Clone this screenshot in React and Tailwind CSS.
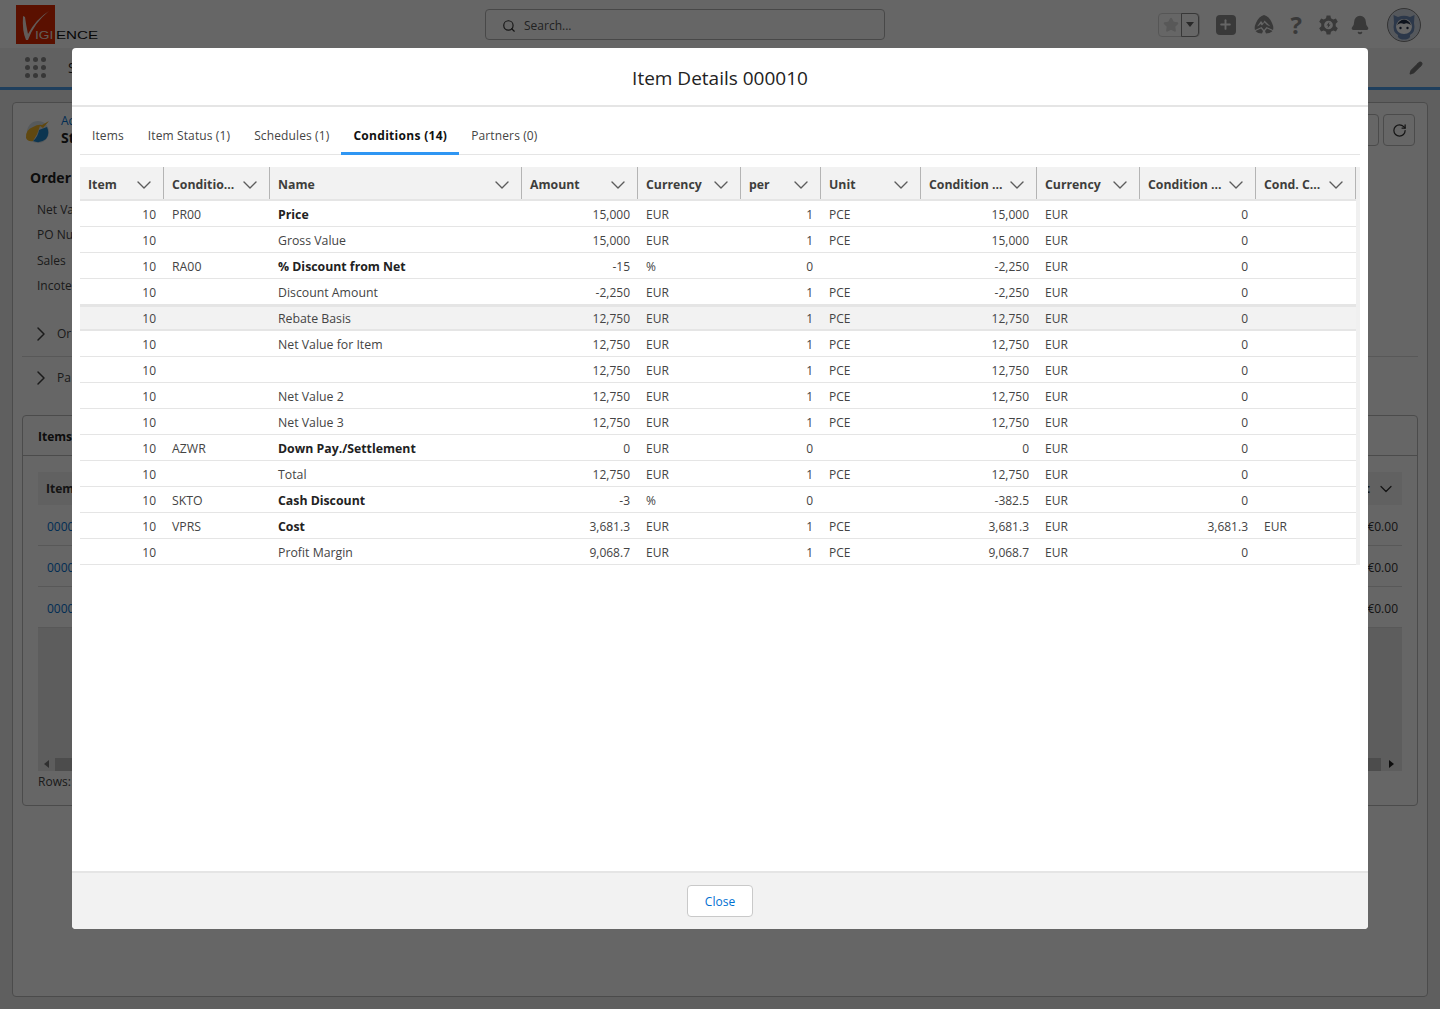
import { ChevronDown, ChevronRight, Search, Plus, Bell, Pencil, RotateCw, Star } from "lucide-react";

const GRID = "grid grid-cols-[84px_106px_252px_116px_103px_80px_100px_116px_103px_116px_100px]";

const HEADERS = ["Item", "Conditio...", "Name", "Amount", "Currency", "per", "Unit", "Condition ...", "Currency", "Condition ...", "Cond. C..."];

const ROWS = [
    ["PR00", "Price", "15,000", "EUR", "1", "PCE", "15,000", "EUR", "0", "", true],
    ["", "Gross Value", "15,000", "EUR", "1", "PCE", "15,000", "EUR", "0", ""],
    ["RA00", "% Discount from Net", "-15", "%", "0", "", "-2,250", "EUR", "0", "", true],
    ["", "Discount Amount", "-2,250", "EUR", "1", "PCE", "-2,250", "EUR", "0", ""],
    ["", "Rebate Basis", "12,750", "EUR", "1", "PCE", "12,750", "EUR", "0", ""],
    ["", "Net Value for Item", "12,750", "EUR", "1", "PCE", "12,750", "EUR", "0", ""],
    ["", "", "12,750", "EUR", "1", "PCE", "12,750", "EUR", "0", ""],
    ["", "Net Value 2", "12,750", "EUR", "1", "PCE", "12,750", "EUR", "0", ""],
    ["", "Net Value 3", "12,750", "EUR", "1", "PCE", "12,750", "EUR", "0", ""],
    ["AZWR", "Down Pay./Settlement", "0", "EUR", "0", "", "0", "EUR", "0", "", true],
    ["", "Total", "12,750", "EUR", "1", "PCE", "12,750", "EUR", "0", ""],
    ["SKTO", "Cash Discount", "-3", "%", "0", "", "-382.5", "EUR", "0", "", true],
    ["VPRS", "Cost", "3,681.3", "EUR", "1", "PCE", "3,681.3", "EUR", "3,681.3", "EUR", true],
    ["", "Profit Margin", "9,068.7", "EUR", "1", "PCE", "9,068.7", "EUR", "0", ""],
];

const TABS = ["Items", "Item Status (1)", "Schedules (1)", "Conditions (14)", "Partners (0)"];

function TrailIcon() {
    return (
        <svg width="20" height="19" viewBox="0 0 20 19">
            <path d="M10 0 Q15 1 18 8 Q20 12 19 15 L12.5 12 L10 15 L7.5 12 L1 15 Q0 12 2 8 Q5 1 10 0 Z" fill="#8f8f8f" />
            <path d="M3 11.5 L7 6 L9 8.5 L10.5 5.5 L16.5 11.5 L13 10 L10.5 7.5 L8 10.5 L6.5 9 L5 10.5 Z" fill="#ffffff" />
            <path d="M1.5 16 L7 13.5 L9 16 L8 18.5 Q3.5 18.5 1.5 16 Z M18.5 16 L13 13.5 L11 16 L12 18.5 Q16.5 18.5 18.5 16 Z" fill="#8f8f8f" />
        </svg>
    );
}

function GearIcon() {
    return (
        <svg width="19" height="20" viewBox="0 0 20 20" fill="#8f8f8f">
            <path d="M8 0 H12 L12.6 3 L15 4.2 L17.8 3.2 L19.8 6.6 L17.6 8.6 V11.4 L19.8 13.4 L17.8 16.8 L15 15.8 L12.6 17 L12 20 H8 L7.4 17 L5 15.8 L2.2 16.8 L0.2 13.4 L2.4 11.4 V8.6 L0.2 6.6 L2.2 3.2 L5 4.2 L7.4 3 Z" />
            <circle cx="10" cy="10" r="4.6" fill="#ffffff" />
            <path d="M11 6.5 L7.8 10.6 H9.6 L9 13.5 L12.2 9.4 H10.4 Z" />
        </svg>
    );
}

function Avatar() {
    return (
        <svg width="34" height="34" viewBox="0 0 34 34">
            <circle cx="17" cy="17" r="16.5" fill="#d5dbe6" stroke="#808080" />
            <path d="M6.5 7 L11 9 Q17 6.5 23 9 L27.5 7 L27 15 Q29 24 23 27 Q24 30 19 31.5 H15 Q10 30 11 27 Q5 24 7 15 Z" fill="#6f8db8" />
            <path d="M9 19 Q10 11 17 11 Q24 11 25 19 Q24 26 17 26 Q10 26 9 19 Z" fill="#ffffff" />
            <path d="M10 17 Q12 12 17 11.5 Q22 12 24 17 Q20 14 17 16 Q13 14 10 17 Z" fill="#243049" />
            <circle cx="13.5" cy="20" r="1.2" fill="#243049" />
            <circle cx="20.5" cy="20" r="1.2" fill="#243049" />
        </svg>
    );
}

function Logo() {
    return (
        <div className="relative mt-[-1px] h-[39px] w-[83px] shrink-0">
            <div className="h-[39px] w-[39px] bg-[#e02800]">
                <svg className="absolute left-0 top-0" width="39" height="39" viewBox="0 0 39 39">
                    <path d="M7 11 Q6 26 10 35 L12 35 Q18 18 33 6 Q20 14 12 29 Q10 20 9 12 Z" fill="#f5e4dc" />
                </svg>
            </div>
            <span className="absolute bottom-[3px] left-[19px] origin-left scale-x-[1.25] font-['Liberation_Sans',sans-serif] text-[11px] leading-none text-[#f5e4dc]">
                IGI
            </span>
            <span className="absolute bottom-[3px] left-[40px] origin-left scale-x-[1.38] font-['Liberation_Sans',sans-serif] text-[11px] leading-none text-[#111]">
                ENCE
            </span>
        </div>
    );
}

function Header() {
    return (
        <header className="flex h-12 items-center bg-white pl-4 pr-[19px] pt-[1px]">
            <Logo />
            <div className="ml-[386px] flex h-[31px] w-[400px] items-center rounded border border-[#b5b5b5] pl-4 pt-[2px] text-xs text-[#555]">
                <Search size={14} className="mr-2 text-[#333]" />
                Search...
            </div>
            <div className="ml-auto flex items-center">
                <div className="flex h-[24px] w-[42px] items-center rounded-sm border border-[#d8d8d8]">
                    <Star size={16} className="ml-[4px] fill-[#dcdcdc] text-[#dcdcdc]" />
                    <div className="ml-auto flex h-[24px] w-[18px] items-center justify-center rounded-r-sm border border-[#8a8a8a]">
                        <div className="h-0 w-0 border-x-[4px] border-t-[5px] border-x-transparent border-t-[#666]" />
                    </div>
                </div>
                <div className="ml-[16px] flex h-5 w-5 items-center justify-center rounded bg-[#8f8f8f]">
                    <Plus size={15} strokeWidth={3} className="text-white" />
                </div>
                <div className="ml-[18px]"><TrailIcon /></div>
                <span className="ml-[17px] font-['Open_Sans',sans-serif] text-[24px] font-bold leading-none text-[#8f8f8f]">?</span>
                <div className="ml-[17px]"><GearIcon /></div>
                <Bell size={20} className="ml-[12px] fill-[#8f8f8f] text-[#8f8f8f]" />
                <div className="ml-[17px]"><Avatar /></div>
            </div>
        </header>
    );
}

function NavBar() {
    return (
        <nav className="flex h-[42px] items-center border-b-[3px] border-[#4f9fe8] bg-[#f3f3f3] pl-[25px] pr-[17px]">
            <div className="grid grid-cols-3 gap-x-[3px] gap-y-[3px]">
                {Array.from({ length: 9 }).map((_, i) => (
                    <span key={i} className="h-[5px] w-[5px] rounded-full bg-[#8a8a8a]" />
                ))}
            </div>
            <span className="ml-[22px] text-sm text-[#222]">S</span>
            <Pencil size={14} className="ml-auto fill-[#777] text-[#777]" />
        </nav>
    );
}

function BrandMark() {
    return (
        <svg className="ml-[3px] mt-[5px] shrink-0" width="25" height="24" viewBox="0 0 25 24">
            <circle cx="13" cy="13" r="11" fill="#d8e0e6" />
            <path d="M14 11 Q19 9 22 8 Q25 15 21 20 Q15 25 8 22 Q13 18 14 11 Z" fill="#1f86c9" />
            <path d="M1 19 Q0 11 8 8 Q13 5 17 6 L24 2 L18 9 L15 7 Q13 15 8 22 Q3 23 1 19 Z" fill="#f0b429" />
        </svg>
    );
}

function BackgroundPage() {
    return (
        <main className="mx-3 mt-3 flex h-[895px] flex-col rounded border border-[#bbb] bg-white px-[9px]">
            <div className="flex h-[65px] items-start pt-[11px]">
                <BrandMark />
                <div className="ml-[11px] text-xs leading-[14px]">
                    <div className="text-[#0070d2]">Ac</div>
                    <div className="text-sm font-bold text-[#222]">St</div>
                </div>
                <div className="ml-auto flex">
                    <div className="h-8 w-8 rounded border border-[#bbb]" />
                    <div className="ml-1 mr-[3px] flex h-8 w-8 items-center justify-center rounded border border-[#bbb]">
                        <RotateCw size={15} className="text-[#333]" />
                    </div>
                </div>
            </div>
            <h2 className="ml-2 text-sm font-bold text-[#222]">Order</h2>
            <div className="ml-[15px] mt-[13px] flex flex-col gap-[8.33px] text-xs leading-[17px] text-[#444]">
                <span>Net Va</span>
                <span>PO Nu</span>
                <span>Sales</span>
                <span>Incote</span>
            </div>
            <div className="mt-[19px] flex h-[44px] items-center border-b border-[#ddd] pl-[7px] text-xs text-[#444]">
                <ChevronRight size={24} strokeWidth={1.5} className="mr-[4px]" />
                Or
            </div>
            <div className="flex h-[43px] items-center pl-[7px] text-xs text-[#444]">
                <ChevronRight size={24} strokeWidth={1.5} className="mr-[4px]" />
                Pa
            </div>
            <section className="mt-[15px] flex h-[391px] flex-col rounded border border-[#bbb] px-[15px]">
                <div className="-mx-[15px] flex h-[40px] items-center border-b border-[#bbb] pl-[15px] pt-[3px] text-xs font-bold text-[#222]">Items</div>
                <div className="mt-[16px] flex h-[33px] items-center justify-between bg-[#f2f2f2] pl-2 pr-[6px] pt-[1px] text-xs font-bold text-[#333]">
                    <span>Item</span>
                    <span className="flex items-center gap-[6px]">t<ChevronDown size={20} strokeWidth={1.5} /></span>
                </div>
                {[0, 1, 2].map((i) => (
                    <div key={i} className="flex h-[41px] items-center justify-between border-b border-[#ddd] pl-[9px] pr-[4px] pt-[4px] text-xs">
                        <span className="text-[#0070d2]">0000</span>
                        <span className="text-[#333]">€0.00</span>
                    </div>
                ))}
                <div className="flex h-[143px] flex-col justify-end bg-[#e8e8e8]">
                    <div className="flex h-[13px] items-center bg-[#e8e8e8] pl-[6px] pr-2">
                        <div className="h-0 w-0 border-y-[4px] border-r-[5px] border-y-transparent border-r-[#777]" />
                        <div className="ml-[6px] h-[13px] flex-1 bg-[#bdbdbd]" />
                        <div className="ml-[8px] h-0 w-0 border-y-[4px] border-l-[5px] border-y-transparent border-l-[#222]" />
                    </div>
                </div>
                <div className="mt-[3px] text-xs text-[#444]">Rows:</div>
            </section>
        </main>
    );
}

function ConditionsTable() {
    return (
        <div className="w-[1280px] bg-[#f0f0f0] pr-1">
            <div className={GRID + " h-[34px] border-b-2 border-[#e5e5e5] bg-[#f2f2f2]"}>
                {HEADERS.map((h, i) => (
                    <div key={i} className="flex h-[32px] items-center justify-between border-r border-[#b4b4b4] pl-2 pr-[7px] pt-[3px] text-[12.3px] font-bold text-[#3e3e3c]">
                        <span className="mt-px">{h}</span>
                        <ChevronDown size={24} strokeWidth={1.4} className="text-[#5c5c5c]" />
                    </div>
                ))}
            </div>
            {ROWS.map((r, i) => {
                const active = i === 4;
                return (
                    <div
                        key={i}
                        className={GRID + " h-[26px] items-center text-xs text-[#444] " + (active ? "border-y-2 border-[#e5e5e5] bg-[#f2f2f2] pt-px" : "border-b border-[#e5e5e5] bg-white pt-[2px]")}
                    >
                        <span className="pr-2 text-right">10</span>
                        <span className="pl-2 text-[12.3px] leading-4">{r[0]}</span>
                        <span className={"pl-2 text-[12.3px] leading-4 " + (r[10] ? "font-bold text-[#222]" : "")}>{r[1]}</span>
                        <span className="pr-2 text-right">{r[2]}</span>
                        <span className="pl-2">{r[3]}</span>
                        <span className="pr-2 text-right">{r[4]}</span>
                        <span className="pl-2">{r[5]}</span>
                        <span className="pr-2 text-right">{r[6]}</span>
                        <span className="pl-2">{r[7]}</span>
                        <span className="pr-2 text-right">{r[8]}</span>
                        <span className="pl-2">{r[9]}</span>
                    </div>
                );
            })}
        </div>
    );
}

function Modal() {
    return (
        <div className="absolute left-[72px] top-[48px] flex h-[881px] w-[1296px] flex-col rounded bg-white">
            <div className="flex h-[59px] shrink-0 items-center justify-center border-b-2 border-[#e5e5e5] pt-[4px] text-[19px] text-[#222]">
                Item Details 000010
            </div>
            <div className="flex min-h-0 flex-1 flex-col px-2">
                <div className="flex h-[48px] w-[1280px] shrink-0 items-end border-b border-[#e5e5e5]">
                    {TABS.map((t, i) => (
                        <div
                            key={t}
                            className={"flex h-[48px] items-center px-3 text-xs " + (i === 3 ? "-mb-px border-b-[3px] border-[#2f96f3] pt-[13px] font-bold tracking-[0.3px] text-[#111]" : "pt-[11px] tracking-[0.12px] text-[#444]")}
                        >
                            {t}
                        </div>
                    ))}
                </div>
                <div className="mt-3"><ConditionsTable /></div>
            </div>
            <div className="flex h-[58px] shrink-0 items-center justify-center rounded-b border-t-2 border-[#e5e5e5] bg-[#f2f2f2]">
                <button className="h-8 w-[66px] rounded border border-[#c9c9c9] bg-white pt-px text-xs text-[#0070d2]">Close</button>
            </div>
        </div>
    );
}

export default function App() {
    return (
        <div className="relative h-[1009px] w-[1440px] overflow-hidden bg-[#eeeeee] font-['Open_Sans',sans-serif]">
            <Header />
            <NavBar />
            <BackgroundPage />
            <div className="absolute inset-0 bg-black/60" />
            <Modal />
        </div>
    );
}
